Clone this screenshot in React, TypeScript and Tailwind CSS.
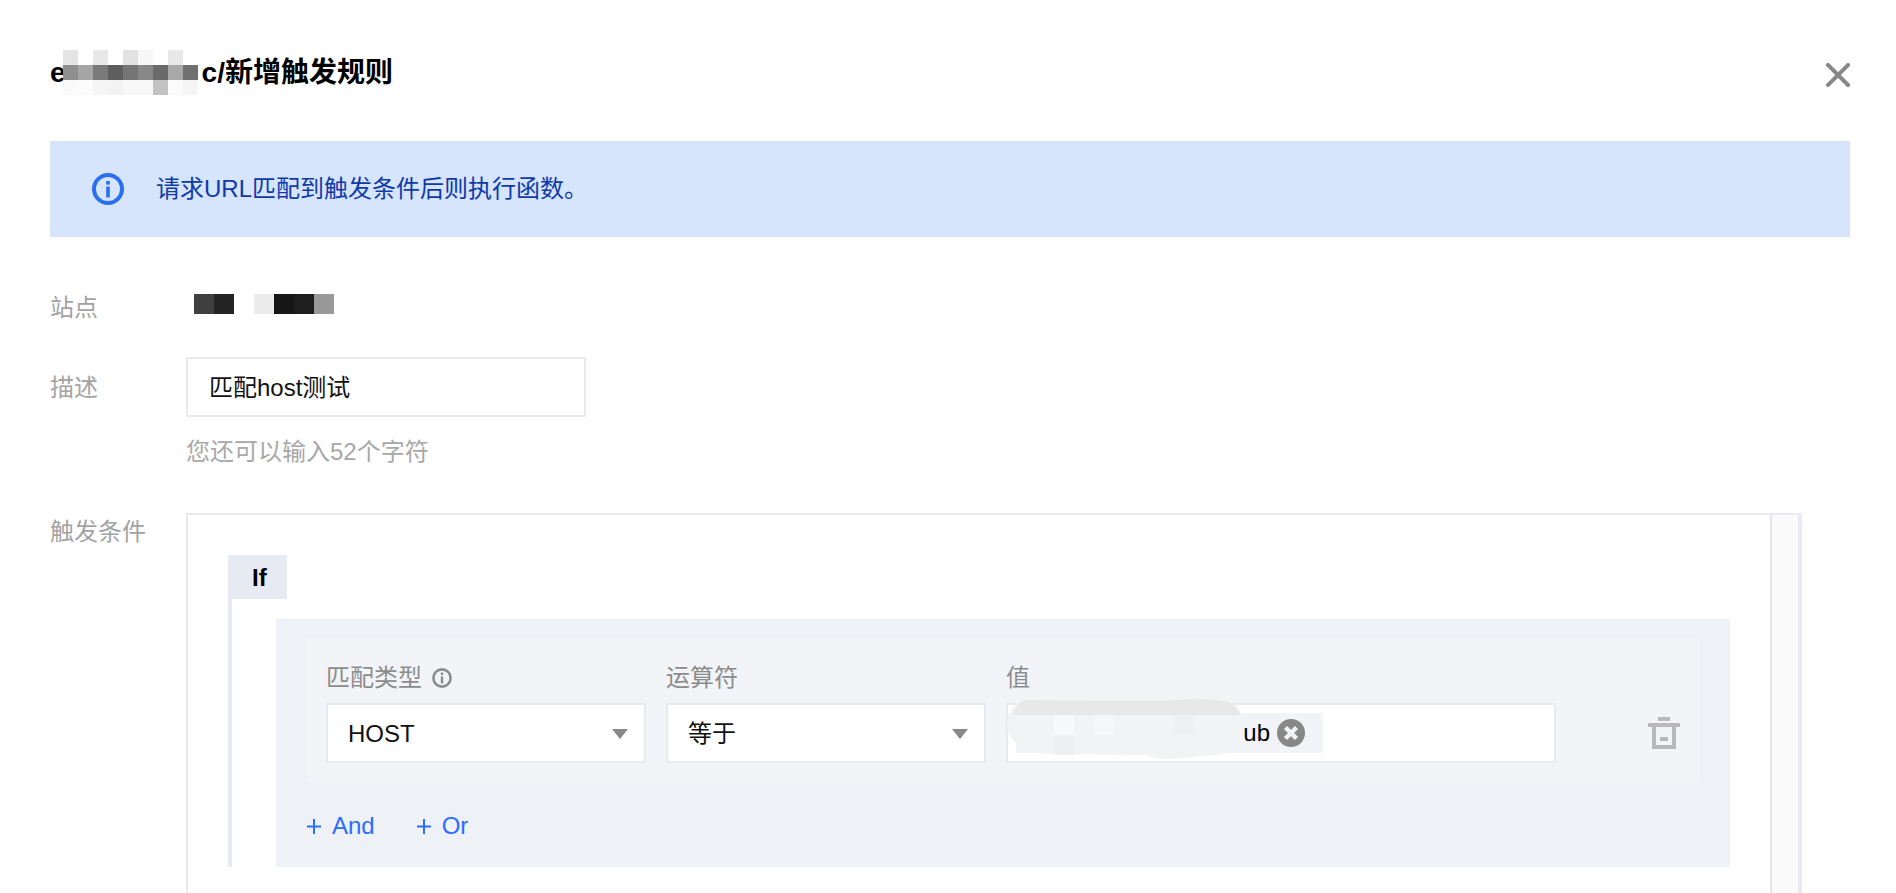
const titleMosaic: string[][] = [
  ['#e4e4e4', '#ffffff', '#e8e8e8', '#ffffff', '#e2e2e2', '#f7f7f7', '#ffffff', '#e8e8e8', '#ffffff'],
  ['#8f8f8f', '#a5a5a5', '#7a7a7a', '#5e5e5e', '#757575', '#888888', '#6a6a6a', '#a8a8a8', '#707070'],
  ['#fafafa', '#fcfcfc', '#f5f5f5', '#f3f3f3', '#f8f8f8', '#f8f8f8', '#c2c2c2', '#fbfbfb', '#f5f5f5'],
];

const siteMosaic = ['#3f3f3f', '#242424', '#ffffff', '#ececec', '#161616', '#1e1e1e', '#999999'];

function Plus() {
  return (
    <svg className="ml-[1px]" width="14" height="15" viewBox="0 0 14 15">
      <path d="M0 7.5H14M7 0V15" stroke="#2a6dff" strokeWidth="2" />
    </svg>
  );
}

function Select({ label, value }: { label: React.ReactNode; value: string }) {
  return (
    <div className="w-[320px] shrink-0">
      <div className="h-[36px] mb-[8px] pt-[2px] flex items-center text-[#8c8c8c]">{label}</div>
      <div className="h-[60px] border-2 border-[#e9eaef] bg-white pl-[20px] pr-[16px] pt-[2px] flex items-center justify-between text-[#111111]">
        <span>{value}</span>
        <svg width="16" height="10" viewBox="0 0 16 10">
          <path d="M0 0H16L8 10Z" fill="#888888" />
        </svg>
      </div>
    </div>
  );
}

export default function App() {
  return (
    <div className="w-[1896px] h-[893px] overflow-hidden bg-white text-[24px] font-['Liberation_Sans','Noto_Sans_CJK_SC',sans-serif]">
      {/* Header */}
      <div className="h-[141px] pl-[50px] pr-[46px] pt-[4px] flex items-center justify-between">
        <div className="relative flex items-center text-[28px] font-bold text-black leading-[36px]">
          <span>e</span>
          <span className="inline-block w-[136px]" />
          <span>c/新增触发规则</span>
          <svg className="absolute left-[13px] top-[-5px]" width="135" height="45" viewBox="0 0 135 45">
            {titleMosaic.map((row, r) =>
              row.map((c, i) => <rect key={`${r}-${i}`} x={i * 15} y={r * 15} width="15" height="15" fill={c} />)
            )}
          </svg>
        </div>
        <svg className="mt-[4px]" width="24" height="24" viewBox="0 0 24 24">
          <path d="M2 2L22 22M22 2L2 22" stroke="#888888" strokeWidth="4" strokeLinecap="square" />
        </svg>
      </div>

      {/* Notice */}
      <div className="mx-[50px] w-[1800px] h-[96px] bg-[#d6e4fc] pl-[42px] flex items-center gap-[32px] text-[#0f3aa8]">
        <svg width="32" height="32" viewBox="0 0 32 32">
          <circle cx="16" cy="16" r="14" fill="none" stroke="#2a6ff0" strokeWidth="4" />
          <rect x="14.2" y="8" width="3.6" height="3.6" fill="#2a6ff0" />
          <rect x="14.2" y="13.5" width="3.6" height="11" fill="#2a6ff0" />
        </svg>
        <span>请求URL匹配到触发条件后则执行函数。</span>
      </div>

      {/* Site */}
      <div className="mt-[50px] pl-[50px] h-[40px] flex items-center">
        <div className="w-[136px] pt-[2px] text-[#a3a3a3]">站点</div>
        <div className="ml-[8px] mt-[-6px] flex">
          {siteMosaic.map((c, i) => (
            <svg key={i} width="20" height="20">
              <rect width="20" height="20" fill={c} />
            </svg>
          ))}
        </div>
      </div>

      {/* Description */}
      <div className="mt-[30px] pl-[50px] flex">
        <div className="w-[136px] h-[60px] pt-[2px] flex items-center text-[#a3a3a3]">描述</div>
        <div>
          <div className="w-[400px] h-[60px] border-2 border-[#e9eaef] pl-[21px] pt-[2px] flex items-center text-[#111111]">匹配host测试</div>
          <div className="mt-[16px] h-[36px] pt-[2px] flex items-center text-[#a8a8a8]">您还可以输入52个字符</div>
        </div>
      </div>

      {/* Trigger */}
      <div className="mt-[44px] pl-[50px] flex">
        <div className="w-[136px] h-[36px] pt-[2px] flex items-center text-[#a3a3a3]">触发条件</div>
        <div className="w-[1616px] h-[380px] border-t-2 border-l-2 border-[#e9e9ef] flex">
          <div className="w-[1582px] pl-[40px] pt-[40px]">
            <div className="w-[59px] h-[44px] bg-[#e7eaf2] pl-[24px] pt-[2px] flex items-center font-bold text-black">If</div>
            <div className="h-[268px] border-l-4 border-[#e7eaf2] pl-[44px] pt-[20px]">
              <div className="w-[1454px] h-[248px] bg-[#eef1f6] pt-[20px] px-[30px]">
                <div className="h-[144px] bg-[#f2f4f8] pl-[20px] pt-[20px] flex gap-[20px]">
                  <Select
                    label={
                      <>
                        <span>匹配类型</span>
                        <svg className="ml-[10px]" width="20" height="20" viewBox="0 0 20 20">
                          <circle cx="10" cy="10" r="8.6" fill="none" stroke="#8c8c8c" strokeWidth="2.6" />
                          <rect x="8.8" y="4.6" width="2.4" height="2.4" fill="#8c8c8c" />
                          <rect x="8.8" y="8.4" width="2.4" height="7" fill="#8c8c8c" />
                        </svg>
                      </>
                    }
                    value="HOST"
                  />
                  <Select label="运算符" value="等于" />
                  <div className="w-[550px] shrink-0">
                    <div className="h-[36px] mb-[8px] pt-[2px] flex items-center text-[#8c8c8c]">值</div>
                    <div className="relative h-[60px] border-2 border-[#e9eaef] bg-white pl-[8px] flex items-center">
                      <div className="w-[307px] h-[40px] bg-[#f2f3f7] pr-[18px] flex items-center justify-end gap-[7px] text-black">
                        <span>ub</span>
                        <svg width="28" height="28" viewBox="0 0 28 28">
                          <circle cx="14" cy="14" r="14" fill="#888888" />
                          <path d="M8.5 8.5L19.5 19.5M19.5 8.5L8.5 19.5" stroke="#f2f3f7" strokeWidth="4.5" />
                        </svg>
                      </div>
                      {/* smear over the redacted value */}
                      <svg className="absolute left-[-1px] top-[-6px]" width="240" height="62" viewBox="0 0 240 62">
                        <path d="M18 1C60 1 100 2 150 2C180 0 205 -1 222 3C234 8 238 20 237 30C236 44 228 53 215 55L165 60C155 61 148 60 140 56L40 55C14 52 0 40 0 26C0 14 6 4 18 1Z" fill="#f2f3f5" />
                        <path d="M18 1C60 1 100 2 150 2C180 0 205 -1 222 3C228 6 231 10 233 16H6C8 8 12 3 18 1Z" fill="#e8e8e8" />
                        <rect x="47" y="16" width="20" height="20" fill="#f8f9fb" />
                        <rect x="47" y="36" width="20" height="20" fill="#eeeff1" />
                        <rect x="87" y="16" width="20" height="20" fill="#f6f7f9" />
                        <rect x="167" y="16" width="20" height="20" fill="#eff0f2" />
                      </svg>
                    </div>
                  </div>
                  <div className="ml-[72px] mt-[44px] h-[60px] flex items-center">
                    <svg width="32" height="32" viewBox="0 0 32 32" fill="#b8b8b8">
                      <rect x="10" y="0" width="12" height="4" />
                      <rect x="0" y="6" width="32" height="4" />
                      <path fillRule="evenodd" d="M4 10H28V32H4ZM8 10V28H24V10Z" />
                      <rect x="12" y="20" width="8" height="4" />
                    </svg>
                  </div>
                </div>
                <div className="mt-[25px] h-[36px] flex items-center gap-[41px] text-[#2a6dff]">
                  <div className="flex items-center gap-[11px]">
                    <Plus />
                    <span>And</span>
                  </div>
                  <div className="flex items-center gap-[11px]">
                    <Plus />
                    <span>Or</span>
                  </div>
                </div>
              </div>
            </div>
          </div>
          <div className="flex-1 border-l-2 border-l-[#e5e5e5] border-r-4 border-r-[#e9e9ef] bg-[#fafafa]" />
        </div>
      </div>
    </div>
  );
}
